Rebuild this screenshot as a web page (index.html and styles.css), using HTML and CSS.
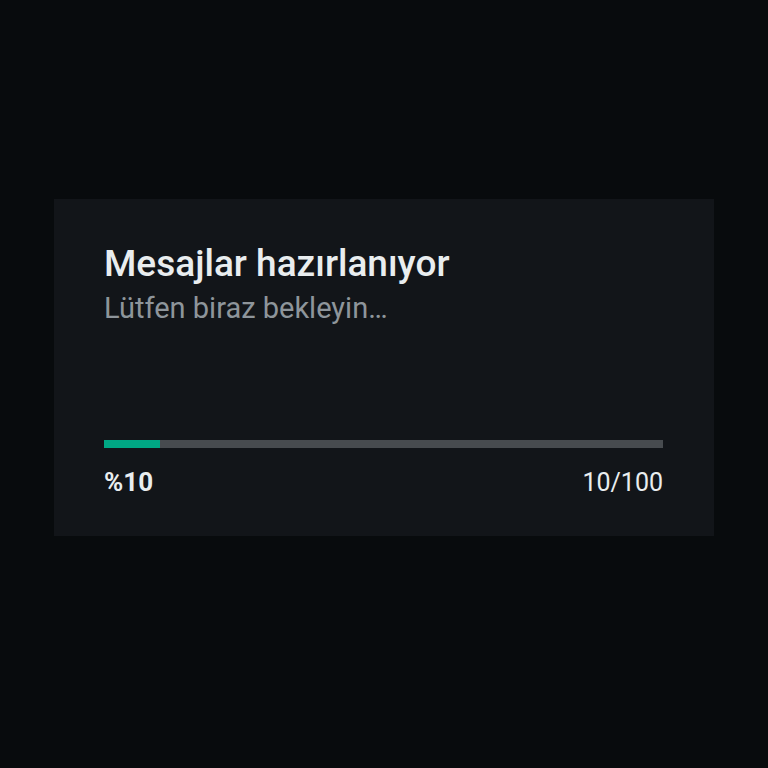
FILE: index.html
```html
<!DOCTYPE html>
<html lang="tr">
<head>
    <meta charset="UTF-8">
    <meta name="viewport" content="width=device-width, initial-scale=1.0">
    <title>Mesajlar hazırlanıyor</title>
    <link rel="stylesheet" href="styles.css">
</head>
<body>
    <div class="dialog">
        <h1 class="title">Mesajlar hazırlanıyor</h1>
        <p class="subtitle">Lütfen biraz bekleyin…</p>

        <div class="progress">
            <div class="progress-bar">
                <div class="progress-fill" style="width: 10%"></div>
            </div>
            <div class="progress-info">
                <span class="percent">%10</span>
                <span class="count">10/100</span>
            </div>
        </div>
    </div>
</body>
</html>
```

FILE: styles.css
```css
:root {
    --background: #080b0d;
    --surface: #121519;
    --primary: #00a884;
    --track: #474b4f;
    --text: #e9edef;
    --muted: #8e959b;
}

body {
    margin: 0;
    min-height: 100vh;
    background: var(--background);
    font-family: Roboto, 'Noto Sans', sans-serif;
    color: var(--text);
    display: flex;
    align-items: center;
    justify-content: center;
}

.dialog {
    width: 660px;
    box-sizing: border-box;
    background: var(--surface);
    padding: 43px 51px 38px 50px;
    margin-top: -34px;
}

.title {
    margin: 0;
    font-size: 37px;
    font-weight: 500;
    line-height: 44px;
}

.subtitle {
    margin: 0;
    font-size: 29px;
    line-height: 44px;
    color: var(--muted);
}

.progress {
    margin-top: 110px;
}

.progress-bar {
    height: 8px;
    background: var(--track);
}

.progress-fill {
    height: 100%;
    background: var(--primary);
}

.progress-info {
    display: flex;
    justify-content: space-between;
    align-items: baseline;
    margin-top: 19px;
    font-size: 25px;
    line-height: 30px;
}

.percent {
    font-weight: 700;
    font-size: 26px;
}
```
